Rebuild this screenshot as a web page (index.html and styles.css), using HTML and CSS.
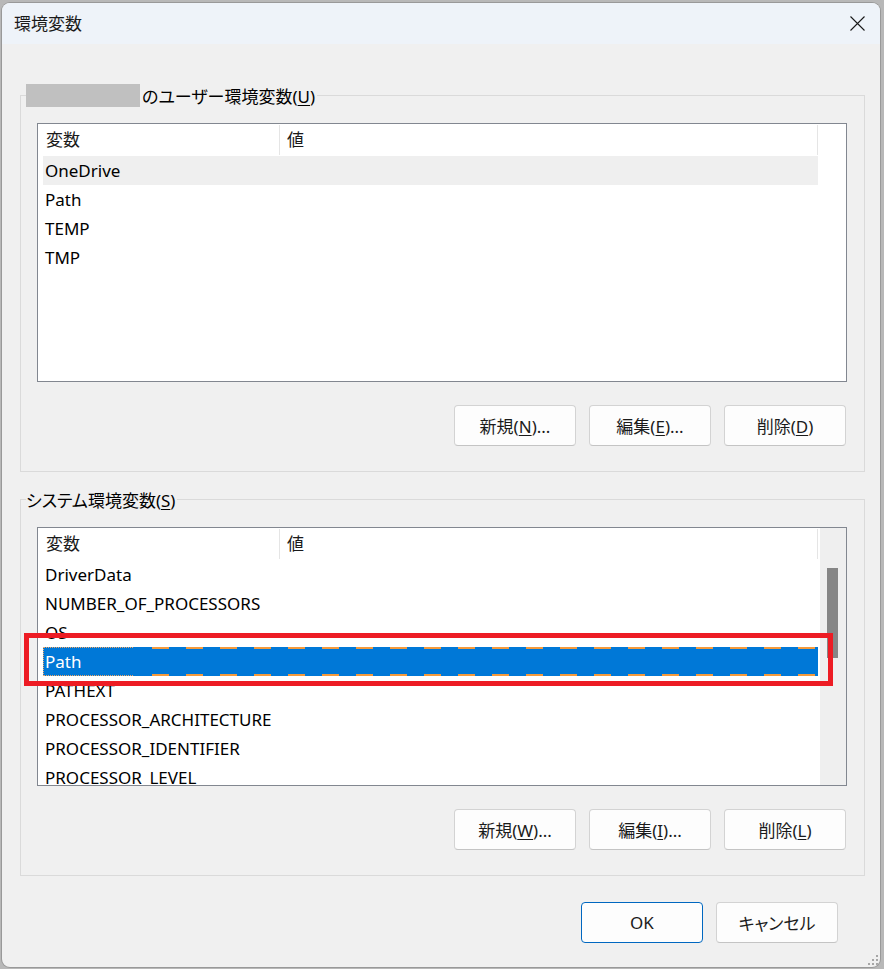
FILE: index.html
```html
<!DOCTYPE html>
<html lang="ja">
<head>
<meta charset="utf-8">
<title>環境変数</title>
<link rel="stylesheet" href="styles.css">
</head>
<body>
<div class="page">
  <div class="dialog">
    <div class="titlebar">
      <span class="title">環境変数</span>
      <svg class="close" width="15" height="15" viewBox="0 0 15 15" aria-label="閉じる">
        <path d="M0.5 0.5 L14.5 14.5 M14.5 0.5 L0.5 14.5" stroke="#1a1a1a" stroke-width="1.1" fill="none"/>
      </svg>
    </div>
    <div class="content">
      <fieldset class="group">
        <legend class="group-title"><span class="redact"></span>のユーザー環境変数(<u>U</u>)</legend>
        <div class="list">
          <div class="list-main">
            <div class="list-header">
              <div class="col col-name">変数</div>
              <div class="col col-value">値</div>
            </div>
            <div class="row hover">OneDrive</div>
            <div class="row">Path</div>
            <div class="row">TEMP</div>
            <div class="row">TMP</div>
          </div>
        </div>
        <div class="buttons">
          <button class="btn">新規(<u>N</u>)...</button>
          <button class="btn">編集(<u>E</u>)...</button>
          <button class="btn">削除(<u>D</u>)</button>
        </div>
      </fieldset>

      <fieldset class="group group-system">
        <legend class="group-title">システム環境変数(<u>S</u>)</legend>
        <div class="list">
          <div class="list-main">
            <div class="list-header">
              <div class="col col-name">変数</div>
              <div class="col col-value">値</div>
            </div>
            <div class="row">DriverData</div>
            <div class="row">NUMBER_OF_PROCESSORS</div>
            <div class="row">OS</div>
            <div class="row selected"><span class="focus-label">Path</span></div>
            <div class="row">PATHEXT</div>
            <div class="row">PROCESSOR_ARCHITECTURE</div>
            <div class="row">PROCESSOR_IDENTIFIER</div>
            <div class="row">PROCESSOR_LEVEL</div>
          </div>
          <div class="scrollbar"><div class="thumb"></div></div>
        </div>
        <div class="buttons">
          <button class="btn">新規(<u>W</u>)...</button>
          <button class="btn">編集(<u>I</u>)...</button>
          <button class="btn">削除(<u>L</u>)</button>
        </div>
      </fieldset>

      <div class="dialog-buttons">
        <button class="btn btn-default">OK</button>
        <button class="btn">キャンセル</button>
      </div>
    </div>

    <div class="annotation"></div>
    <svg class="grip" width="12" height="12" viewBox="0 0 12 12">
      <rect x="9" y="1" width="2" height="2" fill="#a6a6a6"/>
      <rect x="5" y="5" width="2" height="2" fill="#a6a6a6"/>
      <rect x="9" y="5" width="2" height="2" fill="#a6a6a6"/>
      <rect x="1" y="9" width="2" height="2" fill="#a6a6a6"/>
      <rect x="5" y="9" width="2" height="2" fill="#a6a6a6"/>
      <rect x="9" y="9" width="2" height="2" fill="#a6a6a6"/>
    </svg>
  </div>
</div>
</body>
</html>
```

FILE: styles.css
```css
html, body {
  margin: 0;
  padding: 0;
}

body {
  width: 884px;
  height: 969px;
  overflow: hidden;
  background: #b8b8b8;
  font-family: "Segoe UI", "Noto Sans", "Noto Sans CJK JP", sans-serif;
  font-size: 17px;
  font-feature-settings: "palt";
  color: #000;
}

.page {
  padding: 3px 0 0 2px;
}

.dialog {
  position: relative;
  width: 878px;
  height: 964px;
  background: #f0f0f0;
  border-radius: 8px;
  overflow: hidden;
  box-shadow: 0 0 0 1px #999;
  display: flex;
  flex-direction: column;
}

.titlebar {
  height: 41px;
  flex: none;
  background: #eef3f9;
  display: flex;
  align-items: center;
  justify-content: space-between;
  padding: 0 15px 0 12px;
}

.title {
  font-size: 17px;
  color: #1a1a1a;
  line-height: 20px;
  padding-top: 1px;
}

.close {
  display: block;
}

.content {
  padding: 39px 15px 0 18px;
  display: flex;
  flex-direction: column;
}

.group {
  margin: 0;
  padding: 16px 17px 25px 16px;
  border: 1px solid #dadada;
  min-width: 0;
}

.group-system {
  margin-top: 15px;
}

.group-title {
  margin-left: -11px;
  padding: 4px 2px 0 0;
  line-height: 20px;
  height: 24px;
  box-sizing: border-box;
  white-space: nowrap;
  color: #000;
}

.redact {
  display: inline-block;
  width: 114px;
  height: 23px;
  background: #c0c0c0;
  margin: -3px 2px 0 0;
  vertical-align: top;
}

u {
  text-decoration-thickness: 1px;
  text-underline-offset: 2px;
}

.list {
  width: 810px;
  height: 259px;
  box-sizing: border-box;
  border: 1px solid #828790;
  background: #fff;
  display: flex;
  overflow: hidden;
}

.list-main {
  width: 782px;
  flex: none;
  padding: 0 2px 0 5px;
  box-sizing: border-box;
}

.list-header {
  height: 32px;
  display: flex;
  align-items: center;
}

.col {
  height: 30px;
  line-height: 30px;
  box-sizing: border-box;
  border-right: 1px solid #e5e5e5;
  color: #1a1a1a;
}

.col-name {
  width: 237px;
  padding-left: 3px;
}

.col-value {
  flex: 1;
  padding-left: 7px;
}

.row {
  height: 29px;
  line-height: 29px;
  padding-left: 2px;
  white-space: nowrap;
}

.row.hover {
  background: #efefef;
}

.row.selected {
  padding-left: 0;
  color: #fff;
  background-color: #0078d7;
  background-image:
    repeating-linear-gradient(90deg, #f49a3c 0 17px, transparent 17px 34px),
    repeating-linear-gradient(90deg, #f49a3c 0 17px, transparent 17px 34px);
  background-size: 666px 2px, 666px 2px;
  background-position: right top, right bottom;
  background-repeat: no-repeat;
}

.focus-label {
  display: inline-block;
  box-sizing: border-box;
  width: 90px;
  height: 29px;
  line-height: 27px;
  padding-left: 1px;
  border: 1px dotted #f2a866;
  border-right: 0;
  vertical-align: top;
}

.scrollbar {
  width: 26px;
  flex: none;
  background: #efefef;
  padding: 40px 8px 0 7px;
  box-sizing: border-box;
}

.thumb {
  height: 90px;
  background: #868686;
}

.buttons {
  margin-top: 23px;
  display: flex;
  justify-content: flex-end;
  gap: 13px;
  padding-right: 1px;
}

.btn {
  width: 122px;
  height: 41px;
  box-sizing: border-box;
  border: 1px solid #d3d3d3;
  border-bottom-color: #c4c4c4;
  border-radius: 4px;
  background: #fdfdfd;
  font-family: inherit;
  font-size: 17px;
  font-feature-settings: "palt";
  color: #1b1b1b;
  padding: 0;
}

.btn-default {
  border: 1px solid #0067c0;
}

.dialog-buttons {
  margin-top: 26px;
  margin-right: 27px;
  display: flex;
  justify-content: flex-end;
  gap: 13px;
}

.annotation {
  position: absolute;
  left: 22px;
  top: 630px;
  width: 809px;
  height: 53px;
  box-sizing: border-box;
  border: 5px solid #ed1c24;
}

.grip {
  position: absolute;
  right: 1px;
  bottom: 1px;
}
```
